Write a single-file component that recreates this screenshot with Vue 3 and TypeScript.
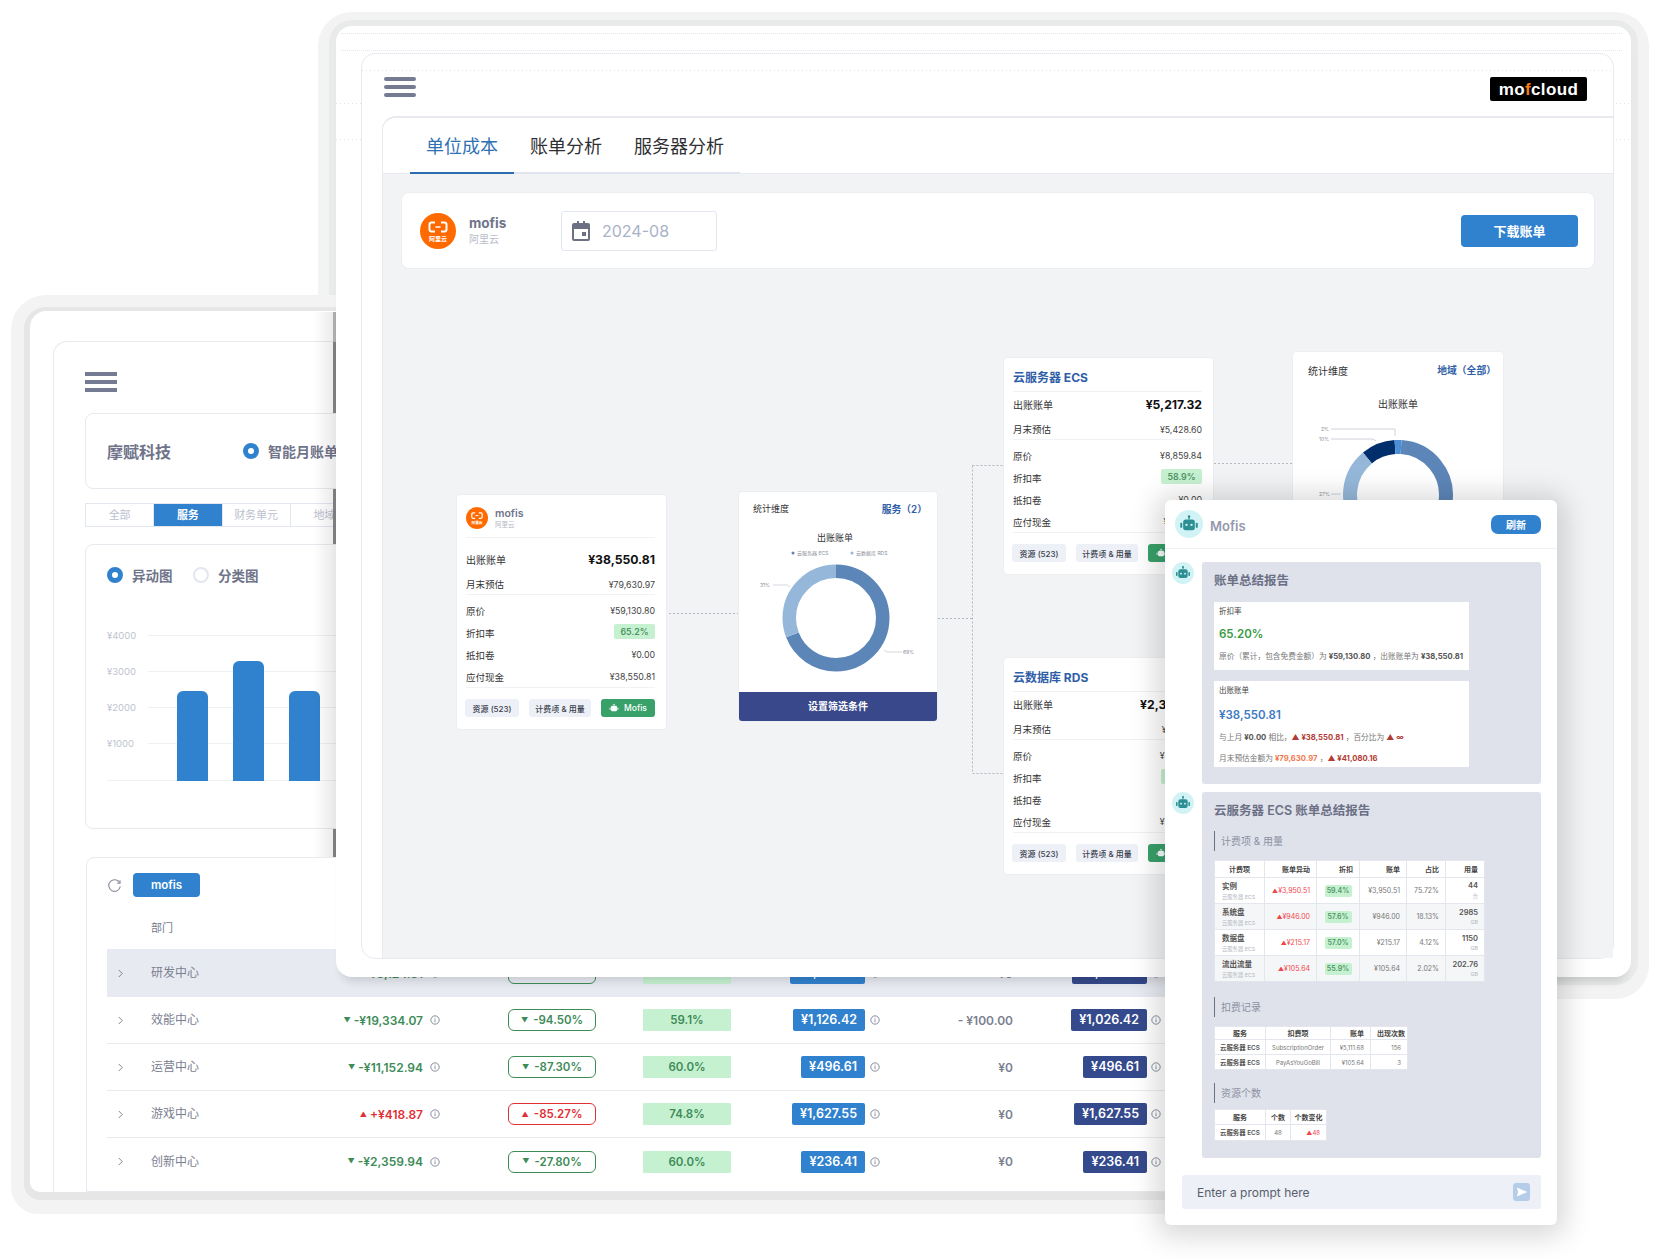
<script setup lang="ts">
interface CostRow {
  label: string;
  value: string;
  rate?: boolean;
}
interface CostCard {
  key: string;
  title?: string;
  bill: string;
  estimate: string;
  rows: CostRow[];
}
interface DeptRow {
  name: string;
  amount: string;
  up: boolean;
  change: string;
  rate: string;
  bill: string;
  adjust: string;
  final: string;
  active?: boolean;
}

const costCards: CostCard[] = [
  {
    key: "root",
    bill: "¥38,550.81",
    estimate: "¥79,630.97",
    rows: [
      { label: "原价", value: "¥59,130.80" },
      { label: "折扣率", value: "65.2%", rate: true },
      { label: "抵扣卷", value: "¥0.00" },
      { label: "应付现金", value: "¥38,550.81" },
    ],
  },
  {
    key: "ecs",
    title: "云服务器 ECS",
    bill: "¥5,217.32",
    estimate: "¥5,428.60",
    rows: [
      { label: "原价", value: "¥8,859.84" },
      { label: "折扣率", value: "58.9%", rate: true },
      { label: "抵扣卷", value: "¥0.00" },
      { label: "应付现金", value: "¥5,217.32" },
    ],
  },
  {
    key: "rds",
    title: "云数据库 RDS",
    bill: "¥2,333.49",
    estimate: "¥2,402.18",
    rows: [
      { label: "原价", value: "¥3,990.20" },
      { label: "折扣率", value: "58.5%", rate: true },
      { label: "抵扣卷", value: "¥0.00" },
      { label: "应付现金", value: "¥2,333.49" },
    ],
  },
];

const deptRows: DeptRow[] = [
  { name: "研发中心", amount: "-¥8,124.31", up: false, change: "-78.40%", rate: "61.2%", bill: "¥2,214.70", adjust: "¥0", final: "¥2,214.70", active: true },
  { name: "效能中心", amount: "-¥19,334.07", up: false, change: "-94.50%", rate: "59.1%", bill: "¥1,126.42", adjust: "- ¥100.00", final: "¥1,026.42" },
  { name: "运营中心", amount: "-¥11,152.94", up: false, change: "-87.30%", rate: "60.0%", bill: "¥496.61", adjust: "¥0", final: "¥496.61" },
  { name: "游戏中心", amount: "+¥418.87", up: true, change: "-85.27%", rate: "74.8%", bill: "¥1,627.55", adjust: "¥0", final: "¥1,627.55" },
  { name: "创新中心", amount: "-¥2,359.94", up: false, change: "-27.80%", rate: "60.0%", bill: "¥236.41", adjust: "¥0", final: "¥236.41" },
];

const usageRows = [
  { name: "实例", change: "¥3,950.51", rate: "59.4%", bill: "¥3,950.51", share: "75.72%", use: "44", unit: "台" },
  { name: "系统盘", change: "¥946.00", rate: "57.6%", bill: "¥946.00", share: "18.13%", use: "2985", unit: "GB" },
  { name: "数据盘", change: "¥215.17", rate: "57.0%", bill: "¥215.17", share: "4.12%", use: "1150", unit: "GB" },
  { name: "流出流量", change: "¥105.64", rate: "55.9%", bill: "¥105.64", share: "2.02%", use: "202.76", unit: "GB" },
];

const segments = [
  { label: "全部", active: false },
  { label: "服务", active: true },
  { label: "财务单元", active: false },
  { label: "地域", active: false },
];

const axis = ["¥4000", "¥3000", "¥2000", "¥1000"];

function arcs(parts: { pct: number; color: string }[], r: number) {
  const c = 2 * Math.PI * r;
  let at = 0;
  return parts.map((p) => {
    const arc = {
      color: p.color,
      dash: `${(p.pct / 100) * c} ${c}`,
      offset: (-at / 100) * c,
    };
    at += p.pct;
    return arc;
  });
}

const serviceArcs = arcs(
  [
    { pct: 69, color: "#5d86b8" },
    { pct: 31, color: "#95b8da" },
  ],
  46.75,
);
const regionArcs = arcs(
  [
    { pct: 10, color: "#002f6c" },
    { pct: 2, color: "#4a90d9" },
    { pct: 61, color: "#5d86b8" },
    { pct: 27, color: "#95b8da" },
  ],
  48,
);
</script>

<template>
  <div class="canvas">
    <svg class="symbols" width="0" height="0">
      <symbol id="bot" viewBox="0 0 24 24">
        <rect x="11.2" y="2.5" width="1.6" height="4" />
        <circle cx="12" cy="3" r="1.5" />
        <rect x="5" y="6.5" width="14" height="13" rx="3" />
        <rect x="1.5" y="10.5" width="2.4" height="6" rx="1" />
        <rect x="20.1" y="10.5" width="2.4" height="6" rx="1" />
        <circle cx="9" cy="13" r="1.4" fill="#d2f3f5" />
        <circle cx="15" cy="13" r="1.4" fill="#d2f3f5" />
      </symbol>
      <symbol id="aliyun" viewBox="0 0 36 36">
        <circle cx="18" cy="18" r="18" fill="#ff6a00" />
        <path d="M15 9.5h-3.5a2 2 0 0 0-2 2v5a2 2 0 0 0 2 2H15M21 9.5h3.5a2 2 0 0 1 2 2v5a2 2 0 0 1-2 2H21" fill="none" stroke="#fff" stroke-width="2" />
        <path d="M15.5 14h5" stroke="#fff" stroke-width="1.6" />
        <text x="18" y="27.5" text-anchor="middle" font-size="6" fill="#fff" font-weight="700">阿里云</text>
      </symbol>
      <symbol id="info" viewBox="0 0 12 12">
        <circle cx="6" cy="6" r="5" fill="none" stroke="#70778a" stroke-width="1" />
        <path d="M6 5.2v3.4M6 3.2v1" stroke="#70778a" stroke-width="1" />
      </symbol>
    </svg>

    <!-- glow of the main window sits behind the back window -->
    <div class="main-glow"></div>

    <!-- back window -->
    <section class="back-win">
      <div class="edge edge-top"></div>
      <div class="edge edge-side"></div>
      <div class="edge-fade"></div>
      <div class="back-frame">
        <div class="burger burger-flat"><i></i><i></i><i></i></div>
        <div class="org-card">
          <span class="org-name">摩赋科技</span>
          <span class="radio on"></span>
          <span class="org-mode">智能月账单</span>
        </div>
        <div class="seg">
          <span v-for="s in segments" :key="s.label" class="seg-item" :class="{ 'seg-on': s.active }">{{ s.label }}</span>
        </div>
        <div class="chart-card">
          <div class="chart-modes">
            <span class="radio on"></span>
            <span class="mode-label">异动图</span>
            <span class="radio"></span>
            <span class="mode-label">分类图</span>
          </div>
          <div class="plot">
            <div v-for="tick in axis" :key="tick" class="tick">
              <span class="tick-label">{{ tick }}</span>
              <span class="tick-line"></span>
            </div>
            <div class="bars">
              <span class="bar bar-a"></span>
              <span class="bar bar-b"></span>
              <span class="bar bar-a"></span>
            </div>
          </div>
        </div>
        <div class="table-card">
          <div class="table-top">
            <svg class="refresh" viewBox="0 0 16 16" width="15" height="15">
              <path d="M13.6 5.2A6.2 6.2 0 1 0 14.2 9" fill="none" stroke="#8a8f9e" stroke-width="1.2" />
              <path d="M13.9 2.4v3.2h-3.2" fill="none" stroke="#8a8f9e" stroke-width="1.2" />
            </svg>
            <span class="tag-mofis">mofis</span>
          </div>
          <div class="dept-head">部门</div>
          <div v-for="row in deptRows" :key="row.name" class="dept-row" :class="{ 'dept-active': row.active }">
            <svg class="chevron" viewBox="0 0 8 10" width="7" height="9">
              <path d="M2 1l4 4-4 4" fill="none" stroke="#6f7482" stroke-width="1" />
            </svg>
            <span class="dept-name">{{ row.name }}</span>
            <span class="dept-amount" :class="row.up ? 'is-up' : 'is-down'">
              <small>{{ row.up ? "▲" : "▼" }}</small> {{ row.amount }}
              <svg class="info" width="10" height="10"><use href="#info" /></svg>
            </span>
            <span class="dept-pill-cell">
              <span class="dept-pill" :class="row.up ? 'is-up' : 'is-down'"><small>{{ row.up ? "▲" : "▼" }}</small> {{ row.change }}</span>
            </span>
            <span class="dept-rate-cell"><span class="dept-rate">{{ row.rate }}</span></span>
            <span class="dept-money">
              <b class="money-blue">{{ row.bill }}</b>
              <svg class="info" width="10" height="10"><use href="#info" /></svg>
            </span>
            <span class="dept-adjust">{{ row.adjust }}</span>
            <span class="dept-money dept-final">
              <b class="money-navy">{{ row.final }}</b>
              <svg class="info" width="10" height="10"><use href="#info" /></svg>
            </span>
          </div>
        </div>
      </div>
    </section>

    <!-- main window -->
    <section class="main-win">
      <div class="dot-line"></div>
      <div class="main-frame">
        <header class="main-head">
          <div class="burger"><i></i><i></i><i></i></div>
          <div class="brand">mo<em>f</em>cloud</div>
        </header>
        <div class="panel">
          <nav class="tabs">
            <span class="tab tab-on">单位成本</span>
            <span class="tab">账单分析</span>
            <span class="tab">服务器分析</span>
          </nav>
          <div class="toolbar">
            <svg class="logo-lg" width="36" height="36"><use href="#aliyun" /></svg>
            <div class="account">
              <strong>mofis</strong>
              <span>阿里云</span>
            </div>
            <div class="date-box">
              <svg viewBox="0 0 18 20" width="18" height="20">
                <path d="M2 2h3V0h2v2h4V0h2v2h3a2 2 0 0 1 2 2v14a2 2 0 0 1-2 2H2a2 2 0 0 1-2-2V4a2 2 0 0 1 2-2zm0 6v10h14V8H2zm8 3h4v4h-4v-4z" fill="#6b7085" />
              </svg>
              <span>2024-08</span>
            </div>
            <button class="download">下载账单</button>
          </div>
          <div class="flow">
            <svg class="links" width="1231" height="690">
              <g fill="none" stroke="#b4b8c2" stroke-dasharray="2 2">
                <path d="M286 344.5H355" />
                <path d="M555 349.5H589.5M589.5 196.5V504.5M589.5 196.5H621M589.5 504.5H621" />
                <path d="M831 194.5H910" />
              </g>
            </svg>

            <article v-for="card in costCards" :key="card.key" class="cost" :class="'cost-' + card.key">
              <div v-if="!card.title" class="cost-head">
                <svg width="22" height="22"><use href="#aliyun" /></svg>
                <div class="cost-account">
                  <strong>mofis</strong>
                  <span>阿里云</span>
                </div>
              </div>
              <div v-else class="cost-title">{{ card.title }}</div>
              <div class="line-bill" :class="{ 'line-bill-root': !card.title }">
                <span>出账账单</span>
                <b>{{ card.bill }}</b>
              </div>
              <div class="line-est">
                <span>月末预估</span>
                <span class="num">{{ card.estimate }}</span>
              </div>
              <div class="cost-rows">
                <div v-for="row in card.rows" :key="row.label" class="line">
                  <span class="line-label">{{ row.label }}</span>
                  <span v-if="row.rate" class="rate">{{ row.value }}</span>
                  <span v-else class="num">{{ row.value }}</span>
                </div>
              </div>
              <div class="chips">
                <span class="chip chip-res">资源 (523)</span>
                <span class="chip chip-fee">计费项 &amp; 用量</span>
                <span class="chip chip-green">
                  <svg width="10" height="10" fill="#fff"><use href="#bot" /></svg>
                  Mofis
                </span>
              </div>
            </article>

            <article class="stat stat-service">
              <div class="stat-head">
                <span>统计维度</span>
                <b>服务（2）</b>
              </div>
              <div class="stat-title">出账账单</div>
              <svg class="donut" width="199" height="144">
                <circle cx="54" cy="5" r="1.5" fill="#5d86b8" />
                <text x="58" y="7" class="tiny">云服务器 ECS</text>
                <circle cx="113" cy="5" r="1.5" fill="#95b8da" />
                <text x="117" y="7" class="tiny">云数据库 RDS</text>
                <circle
                  v-for="a in serviceArcs"
                  :key="a.color"
                  cx="97"
                  cy="70"
                  r="46.75"
                  fill="none"
                  :stroke="a.color"
                  stroke-width="13.5"
                  :stroke-dasharray="a.dash"
                  :stroke-dashoffset="a.offset"
                  transform="rotate(-90 97 70)"
                />
                <path d="M34 37H48l3 2M145 102l3 2H163" fill="none" stroke="#c4c7cf" stroke-width=".7" />
                <text x="21" y="39" class="tiny">31%</text>
                <text x="164" y="106" class="tiny">69%</text>
              </svg>
              <div class="stat-foot">设置筛选条件</div>
            </article>

            <article class="stat stat-region">
              <div class="stat-head">
                <span>统计维度</span>
                <b>地域（全部）</b>
              </div>
              <div class="stat-title">出账账单</div>
              <svg class="donut" width="211" height="150">
                <circle
                  v-for="a in regionArcs"
                  :key="a.color"
                  cx="105"
                  cy="79"
                  r="48"
                  fill="none"
                  :stroke="a.color"
                  stroke-width="14"
                  :stroke-dasharray="a.dash"
                  :stroke-dashoffset="a.offset"
                  transform="rotate(-129.6 105 79)"
                />
                <path d="M38 13H102V20M38 23H80l3 2M38 78H48" fill="none" stroke="#c4c7cf" stroke-width=".8" />
                <text x="28" y="15" class="tiny">2%</text>
                <text x="26" y="25" class="tiny">10%</text>
                <text x="26" y="80" class="tiny">27%</text>
              </svg>
            </article>
          </div>
        </div>
      </div>
    </section>

    <!-- assistant window -->
    <section class="chat-win">
      <header class="chat-head">
        <span class="avatar avatar-lg"><svg width="20" height="20"><use href="#bot" /></svg></span>
        <span class="chat-name">Mofis</span>
        <button class="chat-refresh">刷新</button>
      </header>
      <div class="chat-body">
        <div class="msg">
          <span class="avatar"><svg width="16" height="16"><use href="#bot" /></svg></span>
          <div class="bubble bubble-a">
            <h3>账单总结报告</h3>
            <div class="report report-a">
              <p class="report-label">折扣率</p>
              <p class="report-big big-green">65.20%</p>
              <p class="report-line">原价（累计，包含免费金额）为 <b>¥59,130.80</b> ，出账账单为 <b>¥38,550.81</b></p>
            </div>
            <div class="report report-b">
              <p class="report-label">出账账单</p>
              <p class="report-big big-blue">¥38,550.81</p>
              <p class="report-line">与上月 <b>¥0.00</b> 相比，<b class="dark-red">▲ ¥38,550.81</b> ，百分比为 <b class="dark-red">▲ ∞</b></p>
              <p class="report-line">月末预估金额为 <b class="orange">¥79,630.97</b> ，<b class="dark-red">▲ ¥41,080.16</b></p>
            </div>
          </div>
        </div>
        <div class="msg msg-b">
          <span class="avatar"><svg width="16" height="16"><use href="#bot" /></svg></span>
          <div class="bubble bubble-b">
            <h3>云服务器 ECS 账单总结报告</h3>
            <h4>计费项 &amp; 用量</h4>
            <table class="t t-usage">
              <thead>
                <tr>
                  <th class="center">计费项</th>
                  <th>账单异动</th>
                  <th>折扣</th>
                  <th>账单</th>
                  <th>占比</th>
                  <th>用量</th>
                </tr>
              </thead>
              <tbody>
                <tr v-for="row in usageRows" :key="row.name">
                  <td class="left"><b>{{ row.name }}</b><small>云服务器 ECS</small></td>
                  <td class="red"><i>▲</i>{{ row.change }}</td>
                  <td class="center"><span class="t-rate">{{ row.rate }}</span></td>
                  <td>{{ row.bill }}</td>
                  <td>{{ row.share }}</td>
                  <td><b>{{ row.use }}</b><small>{{ row.unit }}</small></td>
                </tr>
              </tbody>
            </table>
            <h4 class="h-fee">扣费记录</h4>
            <table class="t t-fee">
              <thead>
                <tr>
                  <th class="center">服务</th>
                  <th class="center">扣费项</th>
                  <th>账单</th>
                  <th>出现次数</th>
                </tr>
              </thead>
              <tbody>
                <tr>
                  <td class="center"><b>云服务器 ECS</b></td>
                  <td class="center">SubscriptionOrder</td>
                  <td>¥5,111.68</td>
                  <td>156</td>
                </tr>
                <tr>
                  <td class="center"><b>云服务器 ECS</b></td>
                  <td class="center">PayAsYouGoBill</td>
                  <td>¥105.64</td>
                  <td>3</td>
                </tr>
              </tbody>
            </table>
            <h4 class="h-res">资源个数</h4>
            <table class="t t-res">
              <thead>
                <tr>
                  <th class="center">服务</th>
                  <th class="center">个数</th>
                  <th class="center">个数变化</th>
                </tr>
              </thead>
              <tbody>
                <tr>
                  <td class="center"><b>云服务器 ECS</b></td>
                  <td class="center">48</td>
                  <td class="red"><i>▲</i>48</td>
                </tr>
              </tbody>
            </table>
          </div>
        </div>
        <div class="prompt">
          <span>Enter a prompt here</span>
          <span class="send">
            <svg viewBox="0 0 16 16" width="12" height="12">
              <path d="M1 2l14 6-14 6 2-6z" fill="#fff" />
            </svg>
          </span>
        </div>
      </div>
    </section>
  </div>
</template>

<style>
html,
body {
  margin: 0;
  background: #fff;
  overflow: hidden;
}
</style>

<style scoped>
.canvas {
  position: relative;
  width: 1661px;
  height: 1259px;
  overflow: hidden;
  background: #fff;
  font-family: Inter, "Noto Sans CJK SC", sans-serif;
  color: #333;
}
.symbols {
  display: none;
}
p,
h3,
h4 {
  margin: 0;
}
small,
i,
em {
  font-style: normal;
}

/* back window */
.main-glow {
  position: absolute;
  z-index: 0;
  left: 336px;
  top: 26px;
  width: 1295px;
  height: 951px;
  border-radius: 16px;
  box-shadow: 0 1px 0 7px #e9eaea, 0 4px 0 18px #f3f3f3;
}
.back-win {
  position: absolute;
  z-index: 1;
  left: 30px;
  top: 311px;
  width: 1370px;
  height: 881px;
  background: #fff;
  border-radius: 16px 0 0 10px;
  box-shadow: 0 2px 0 6px #e6e6e6, 0 3px 0 19px #f3f3f3;
}
.edge {
  position: absolute;
  left: 303px;
  width: 3px;
}
.edge-top {
  top: 1px;
  height: 30px;
  background: #bdbdbd;
}
.edge-side {
  top: 31px;
  height: 515px;
  background: #8a8a8a;
}
.edge-fade {
  position: absolute;
  z-index: 2;
  left: 283px;
  top: 1px;
  width: 23px;
  height: 545px;
  background: linear-gradient(90deg, rgba(0, 0, 0, 0), rgba(0, 0, 0, 0.09));
}
.back-frame {
  margin: 30px 0 0 23px;
  height: 851px;
  box-sizing: border-box;
  padding: 30px 0 0 31px;
  border: 1px solid #e8eaef;
  border-width: 1px 0 0 1px;
  border-radius: 14px 0 0 0;
}
.burger {
  display: flex;
  flex-direction: column;
  justify-content: space-between;
  width: 32px;
  height: 20px;
}
.burger i {
  display: block;
  height: 4px;
  border-radius: 2px;
  background: #767b94;
}
.burger-flat i {
  border-radius: 0;
}
.org-card,
.chart-card {
  position: relative;
  z-index: 1;
  box-sizing: border-box;
  width: 560px;
  background: #fff;
  border: 1px solid #e8eaef;
  border-radius: 8px;
}
.org-card {
  display: flex;
  align-items: center;
  height: 76px;
  margin-top: 21px;
  padding-left: 21px;
}
.org-name {
  width: 136px;
  font-size: 16px;
  font-weight: 700;
  color: #6f748a;
}
.org-mode {
  margin-left: 9px;
  font-size: 14px;
  font-weight: 600;
  color: #6f748a;
}
.radio {
  box-sizing: border-box;
  width: 16px;
  height: 16px;
  border: 2px solid #e2e6ef;
  border-radius: 50%;
}
.radio.on {
  border: 5px solid #3182ce;
}
.seg {
  display: flex;
  width: 274px;
  height: 24px;
  margin: 14px 0 0;
  border: 1px solid #e2e6ef;
  border-right: 0;
  box-sizing: border-box;
}
.seg-item {
  width: 68px;
  line-height: 22px;
  text-align: center;
  font-size: 11px;
  color: #bcc1cf;
  border-right: 1px solid #e2e6ef;
}
.seg-on {
  background: #3182ce;
  color: #fff;
  font-weight: 700;
}
.chart-card {
  height: 285px;
  margin-top: 17px;
  padding: 22px 0 0 21px;
}
.chart-modes {
  display: flex;
  align-items: center;
  height: 16px;
}
.mode-label {
  width: 61px;
  margin-left: 9px;
  font-size: 13.5px;
  font-weight: 600;
  color: #6f748a;
}
.plot {
  position: relative;
  margin-top: 52px;
  height: 145px;
  border-bottom: 1px solid #f0f1f5;
}
.tick {
  display: flex;
  height: 36px;
}
.tick-label {
  display: flex;
  align-items: center;
  width: 41px;
  height: 0;
  font-size: 9.5px;
  color: #c0c4d0;
}
.tick-line {
  flex: 1;
  border-top: 1px solid #f0f1f5;
}
.bars {
  position: absolute;
  left: 70px;
  bottom: -1px;
  display: flex;
  align-items: flex-end;
  gap: 25px;
}
.bar {
  width: 31px;
  background: #3182ce;
  border-radius: 6px 6px 0 0;
}
.bar-a {
  height: 90px;
}
.bar-b {
  height: 120px;
}
.table-card {
  box-sizing: border-box;
  width: 1400px;
  height: 335px;
  margin: 28px 0 0 1px;
  padding: 15px 0 0 20px;
  background: #fff;
  border: 1px solid #e8eaef;
  border-radius: 8px 0 0 0;
}
.table-top {
  display: flex;
  align-items: center;
  height: 24px;
  gap: 11px;
}
.tag-mofis {
  width: 67px;
  line-height: 24px;
  text-align: center;
  border-radius: 4px;
  background: #3182ce;
  color: #fff;
  font-size: 11.5px;
  font-weight: 600;
}
.dept-head {
  height: 52px;
  box-sizing: border-box;
  padding: 24px 0 0 44px;
  font-size: 11px;
  line-height: 14px;
  color: #747a8a;
}
.dept-row {
  display: grid;
  grid-template-columns: 44px 120px 169px 156px 135px 149px 133px 148px;
  align-items: center;
  height: 47px;
  box-sizing: border-box;
  width: 1100px;
  border-bottom: 1px solid #e9ebf1;
}
.dept-active {
  height: 48px;
  background: #e8eaf2;
  border-bottom: 0;
}
.dept-row:last-child {
  border-bottom: 0;
}
.chevron {
  margin-left: 10px;
}
.dept-name {
  margin-top: -3px;
  font-size: 12px;
  color: #7b8090;
}
.dept-amount {
  display: flex;
  align-items: center;
  justify-content: flex-end;
  gap: 3px;
  font-size: 12px;
  font-weight: 600;
}
.dept-amount small,
.dept-pill small {
  font-size: 7px;
}
.dept-amount .info {
  margin-left: 4px;
}
.is-down {
  color: #3d8b57;
}
.is-up {
  color: #e02f35;
}
.dept-pill-cell,
.dept-rate-cell,
.dept-money {
  display: flex;
  justify-content: flex-end;
  align-items: center;
}
.dept-pill {
  display: flex;
  align-items: center;
  justify-content: center;
  gap: 5px;
  box-sizing: border-box;
  width: 88px;
  height: 22px;
  border: 1px solid currentColor;
  border-radius: 6px;
  font-size: 11.5px;
  font-weight: 600;
}
.dept-rate {
  width: 88px;
  line-height: 22px;
  text-align: center;
  background: #c6f1d1;
  border-radius: 1px;
  font-size: 11.5px;
  font-weight: 600;
  color: #3d8b57;
}
.dept-money {
  gap: 5px;
}
.dept-money b {
  padding: 0 8px;
  line-height: 22px;
  border-radius: 2px;
  color: #fff;
  font-size: 12.5px;
  font-weight: 600;
}
.money-blue {
  background: #3182ce;
}
.money-navy {
  background: #354a8c;
}
.dept-final {
  gap: 4px;
}
.dept-adjust {
  text-align: right;
  font-size: 12px;
  font-weight: 600;
  color: #7b8090;
}

/* main window */
.main-win {
  position: absolute;
  z-index: 2;
  left: 336px;
  top: 26px;
  box-sizing: border-box;
  width: 1295px;
  height: 951px;
  padding: 7px 17px 18px 25px;
  background-color: #fff;
  background-image: linear-gradient(90deg, #e3e4e8 1px, transparent 1px), linear-gradient(90deg, #e3e4e8 1px, transparent 1px);
  background-size: 4px 1px;
  background-repeat: repeat-x;
  background-position: 0 77px, 0 113px;
  border-radius: 16px;
  box-shadow: 0 10px 10px -6px rgba(0, 0, 0, 0.14);
}
.dot-line {
  height: 18px;
  margin: 0 -8px 2px -20px;
  box-sizing: border-box;
  border-top: 1px dotted #e6e7ea;
  border-bottom: 1px dotted #e6e7ea;
}
.main-frame {
  display: flex;
  flex-direction: column;
  height: 906px;
  box-sizing: border-box;
  background: #fff;
  border: 1px solid #e8eaef;
  border-radius: 14px;
}
.main-head {
  display: flex;
  justify-content: space-between;
  height: 62px;
  box-sizing: border-box;
  padding: 23px 26px 0 22px;
  background-image: linear-gradient(90deg, #e3e4e8 1px, transparent 1px);
  background-size: 4px 1px;
  background-repeat: repeat-x;
  background-position: 0 16px;
}
.brand {
  width: 97px;
  height: 24px;
  line-height: 25px;
  text-align: center;
  background: #000;
  border-radius: 2px;
  color: #fff;
  font-family: "Liberation Sans", sans-serif;
  font-size: 17px;
  font-weight: 700;
  letter-spacing: 0.4px;
}
.brand em {
  color: #f57c14;
}
.panel {
  flex: 1;
  display: flex;
  flex-direction: column;
  margin-left: 20px;
  border: 1px solid #e8eaef;
  border-width: 2px 0 0 1px;
  border-radius: 14px 0 0 0;
  background: #f2f3f5;
  overflow: hidden;
}
.tabs {
  display: flex;
  height: 56px;
  box-sizing: border-box;
  padding-left: 27px;
  background: #fff;
  border-bottom: 1px solid #e9ebef;
}
.tab {
  height: 56px;
  box-sizing: border-box;
  padding: 0 16px;
  line-height: 57px;
  font-size: 18px;
  color: #2f2f33;
  border-bottom: 2px solid #e0e4ee;
}
.tab-on {
  color: #2f6fb3;
  border-bottom-color: #2b6cb0;
}
.toolbar {
  display: flex;
  align-items: center;
  height: 77px;
  box-sizing: border-box;
  margin: 18px 18px 0;
  padding: 0 16px 0 18px;
  background: #fff;
  border: 1px solid #eceef1;
  border-radius: 8px;
}
.account {
  display: flex;
  flex-direction: column;
  width: 92px;
  margin-left: 13px;
}
.account strong {
  font-size: 13.5px;
  line-height: 18px;
  color: #6f748a;
}
.account span {
  font-size: 10px;
  line-height: 15px;
  color: #b9bdc9;
}
.date-box {
  display: flex;
  align-items: center;
  gap: 12px;
  box-sizing: border-box;
  width: 156px;
  height: 40px;
  padding-left: 10px;
  border: 1px solid #e2e6ef;
  border-radius: 3px;
  font-size: 16px;
  color: #a9b2c6;
}
.download {
  margin-left: auto;
  width: 117px;
  height: 32px;
  border: 0;
  border-radius: 4px;
  background: #3182ce;
  color: #fff;
  font-family: inherit;
  font-size: 13px;
  font-weight: 600;
}
.flow {
  position: relative;
  flex: 1;
}
.links {
  position: absolute;
  left: 0;
  top: 0;
}
.cost,
.stat {
  position: absolute;
  box-sizing: border-box;
  background: #fff;
  border: 1px solid #eceef1;
  border-radius: 4px;
}
.cost {
  width: 211px;
  padding: 0 11px 12px 9px;
}
.cost-root {
  left: 73px;
  top: 225px;
}
.cost-ecs {
  left: 620px;
  top: 88px;
}
.cost-rds {
  left: 620px;
  top: 388px;
}
.cost-head {
  display: flex;
  align-items: center;
  gap: 7px;
  height: 43px;
  box-sizing: border-box;
  padding-top: 3px;
  border-bottom: 1px solid #f1f2f5;
}
.cost-account {
  display: flex;
  flex-direction: column;
  padding-top: 1px;
}
.cost-account strong {
  font-size: 10.5px;
  line-height: 13px;
  font-weight: 600;
  color: #6f748a;
}
.cost-account span {
  font-size: 6.5px;
  line-height: 10px;
  color: #b5b9c4;
}
.cost-title {
  height: 34px;
  box-sizing: border-box;
  padding-top: 11px;
  line-height: 18px;
  font-size: 12px;
  font-weight: 700;
  color: #2f5ea8;
  border-bottom: 1px solid #f1f2f5;
}
.line-bill,
.line-est,
.line {
  display: flex;
  justify-content: space-between;
  align-items: center;
}
.line-bill {
  height: 24px;
  padding-top: 1px;
  box-sizing: border-box;
  font-size: 10px;
  color: #333;
}
.line-bill-root {
  margin-top: 9px;
}
.line-bill b {
  font-size: 12.2px;
  font-weight: 700;
  color: #111;
}
.line-est {
  height: 24px;
  box-sizing: border-box;
  padding-top: 3px;
  border-bottom: 1px solid #f1f2f5;
  font-size: 9.5px;
  color: #333;
}
.cost-rows {
  padding: 4px 0 0;
  border-bottom: 1px solid #f1f2f5;
}
.line {
  height: 22px;
  font-size: 9.5px;
}
.line-label {
  padding-top: 2px;
}
.line .rate {
  margin-top: -2px;
}
.num {
  font-size: 8.8px;
  color: #444;
}
.rate {
  width: 41px;
  line-height: 15px;
  text-align: center;
  background: #c6f1d1;
  border-radius: 2px;
  font-size: 8.8px;
  font-weight: 600;
  color: #4d9563;
}
.chips {
  display: flex;
  gap: 10px;
  margin: 11px 0 0 -1px;
}
.chip {
  display: flex;
  align-items: center;
  justify-content: center;
  height: 18px;
  border-radius: 3px;
  background: #edf0f7;
  font-size: 8px;
  font-weight: 500;
  color: #3a3f4d;
}
.chip-res {
  width: 54px;
}
.chip-fee {
  width: 62px;
}
.chip-green {
  width: 54px;
  gap: 5px;
  background: #38a169;
  color: #fff;
  font-size: 8.5px;
}
.stat-service {
  left: 355px;
  top: 222px;
  width: 200px;
  height: 231px;
  overflow: hidden;
}
.stat-region {
  left: 909px;
  top: 82px;
  width: 212px;
  height: 210px;
}
.stat-head {
  display: flex;
  justify-content: space-between;
  align-items: center;
  box-sizing: border-box;
  height: 36px;
  padding: 0 10px 3px 14px;
  font-size: 9px;
  color: #333;
}
.stat-head b {
  font-size: 9.8px;
  font-weight: 600;
  color: #2f5ea8;
}
.stat-region .stat-head {
  height: 40px;
  padding: 0 7px 4px 15px;
  font-size: 10px;
}
.stat-title {
  height: 20px;
  padding-right: 6px;
  line-height: 20px;
  text-align: center;
  font-size: 9px;
  color: #333;
}
.stat-region .stat-title {
  height: 24px;
  padding-right: 0;
  line-height: 24px;
  font-size: 10px;
}
.donut {
  display: block;
}
.tiny {
  font-size: 5px;
  fill: #8a8e9a;
}
.stat-foot {
  line-height: 29px;
  text-align: center;
  background: #38488a;
  color: #fff;
  font-size: 10px;
  font-weight: 600;
}

/* assistant window */
.chat-win {
  position: absolute;
  z-index: 3;
  left: 1165px;
  top: 500px;
  width: 392px;
  height: 725px;
  background: #fff;
  border-radius: 6px;
  box-shadow: 0 3px 28px 8px rgba(0, 0, 0, 0.16);
}
.chat-head {
  display: flex;
  align-items: center;
  height: 49px;
  box-sizing: border-box;
  padding: 0 16px 0 10px;
  border-bottom: 1px solid #f0f1f4;
}
.chat-name {
  margin-left: 7px;
  padding-top: 3px;
  font-size: 13px;
  font-weight: 600;
  color: #9398ad;
}
.chat-refresh {
  margin-left: auto;
  width: 50px;
  height: 19px;
  padding: 0;
  border: 0;
  border-radius: 7px;
  background: #3182ce;
  color: #fff;
  font-family: inherit;
  font-size: 10px;
  font-weight: 600;
}
.avatar {
  display: flex;
  align-items: center;
  justify-content: center;
  flex: none;
  width: 22px;
  height: 22px;
  border-radius: 50%;
  background: #d2f3f5;
  fill: #2c8f94;
}
.avatar-lg {
  width: 28px;
  height: 28px;
}
.chat-body {
  padding-top: 13px;
}
.msg {
  display: flex;
  gap: 8px;
  padding: 0 16px 0 7px;
}
.msg-b {
  margin-top: 8px;
}
.bubble {
  flex: 1;
  box-sizing: border-box;
  padding: 8px 0 17px 12px;
  background: #dfe2eb;
  border-radius: 3px;
}
.bubble h3 {
  height: 20px;
  line-height: 22px;
  font-size: 12.5px;
  font-weight: 600;
  color: #6b7085;
}
.report {
  box-sizing: border-box;
  width: 255px;
  padding-left: 5px;
  background: #fff;
}
.report-a {
  height: 68px;
  margin-top: 12px;
}
.report-b {
  height: 86px;
  margin-top: 11px;
}
.report-label {
  height: 20px;
  line-height: 20px;
  font-size: 7.5px;
  color: #444;
}
.report-big {
  height: 24px;
  line-height: 25px;
  font-size: 11.5px;
  font-weight: 600;
}
.report-b .report-big {
  margin-top: 2px;
}
.big-green {
  color: #3a9a44;
}
.big-blue {
  color: #3d78c0;
}
.report-line {
  height: 21px;
  line-height: 22px;
  font-size: 7.7px;
  color: #777;
  white-space: nowrap;
}
.report-line b {
  color: #555;
}
.report-line b.dark-red {
  color: #b33b35;
}
.report-line b.orange {
  color: #f07a4e;
}
.bubble h4 {
  height: 20px;
  margin-top: 11px;
  padding-left: 6px;
  line-height: 20px;
  font-size: 10px;
  font-weight: 400;
  color: #8b90a1;
  border-left: 1px solid #6b7085;
}
.bubble .h-fee {
  margin-top: 15px;
}
.bubble .h-res {
  margin-top: 13px;
}
.t {
  table-layout: fixed;
  border-collapse: collapse;
  margin-top: 9px;
  background: #fff;
  font-size: 7px;
  color: #777;
  border: 1px solid #d5d8e0;
}
.t th,
.t td {
  box-sizing: border-box;
  padding: 0 6px;
  text-align: right;
  border: 1px solid #e3e6ed;
  white-space: nowrap;
  overflow: hidden;
}
.t th {
  height: 17px;
  font-size: 7px;
  font-weight: 600;
  color: #444;
}
.t td {
  height: 26px;
}
.t b {
  display: block;
  font-weight: 600;
  color: #555;
  font-size: 7.5px;
}
.t small {
  display: block;
  margin-top: 2px;
  font-size: 5.3px;
  color: #b2b6c0;
}
.t .center {
  text-align: center;
  padding: 0 2px;
}
.t .left {
  text-align: left;
  padding-left: 7px;
}
.t .red {
  color: #f0464a;
}
.t .red i {
  font-size: 6px;
}
.t-usage {
  width: 270px;
}
.t-usage tbody tr:nth-child(even) {
  background: #f5f6f8;
}
.t-usage th:nth-child(1) {
  width: 50px;
}
.t-usage th:nth-child(2) {
  width: 52px;
}
.t-usage th:nth-child(3) {
  width: 43px;
}
.t-usage th:nth-child(4) {
  width: 47px;
}
.t-usage th:nth-child(5) {
  width: 39px;
}
.t-usage th:nth-child(6) {
  width: 39px;
}
.t-rate {
  display: inline-block;
  width: 27px;
  line-height: 12px;
  background: #c6f1d1;
  border-radius: 2px;
  font-weight: 600;
  color: #4d9563;
}
.t-fee,
.t-res {
  font-size: 6px;
}
.t-fee b,
.t-res b {
  font-size: 6.4px;
}
.t-fee th {
  height: 13px;
}
.t-fee td {
  height: 15px;
}
.t-fee th:nth-child(1) {
  width: 51px;
}
.t-fee th:nth-child(2) {
  width: 65px;
}
.t-fee th:nth-child(3) {
  width: 40px;
}
.t-fee th:nth-child(4) {
  width: 37px;
}
.t-fee {
  width: 193px;
}
.t-res {
  width: 112px;
  margin-top: 6px;
}
.t-res th {
  height: 15px;
}
.t-res td {
  height: 16px;
}
.t-res th:nth-child(1) {
  width: 51px;
}
.t-res th:nth-child(2) {
  width: 25px;
}
.t-res th:nth-child(3) {
  width: 36px;
}
.prompt {
  display: flex;
  align-items: center;
  justify-content: space-between;
  height: 34px;
  box-sizing: border-box;
  margin: 17px 16px 0 17px;
  padding: 0 11px 0 15px;
  background: #edf0f7;
  border-radius: 3px;
  font-size: 12px;
  color: #5a5e6b;
}
.send {
  display: flex;
  align-items: center;
  justify-content: center;
  width: 17px;
  height: 18px;
  border-radius: 3px;
  background: #b6cde9;
}
</style>
